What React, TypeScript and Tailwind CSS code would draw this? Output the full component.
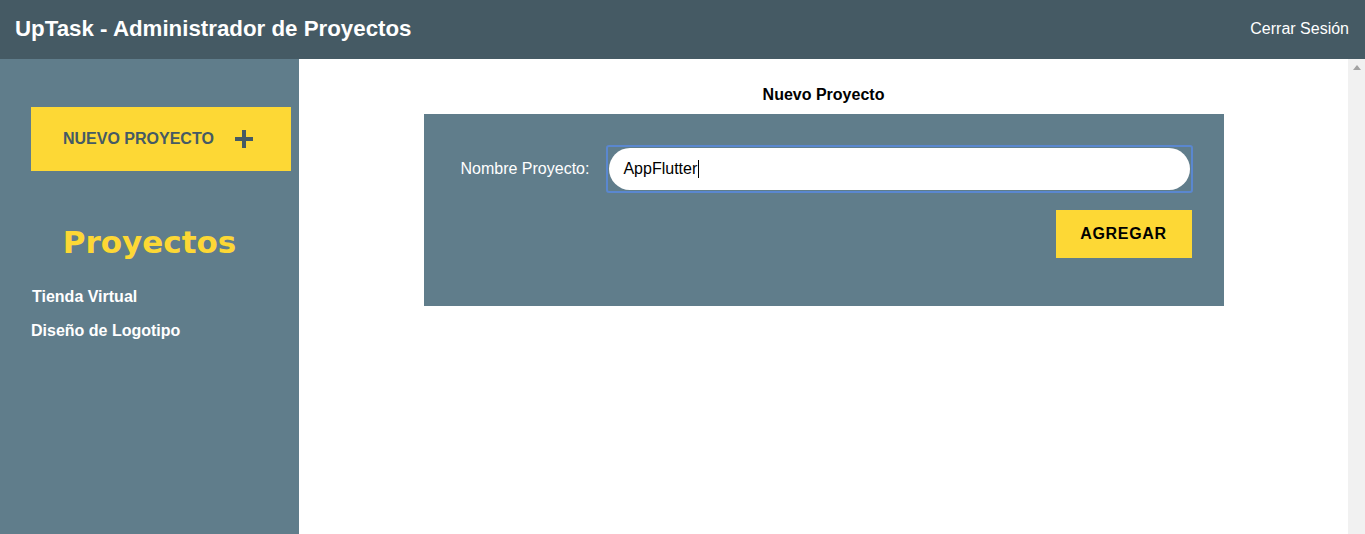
import React from 'react'

function Sidebar() {
    return (
        <aside className="w-[299px] shrink-0 bg-[#607d8b] pt-[48px]">
            <button type="button" className="ml-[31px] w-[260px] h-[64px] bg-[#fdd835] flex items-center pl-[32px] text-[#455a64] text-[16px] font-bold">
                NUEVO PROYECTO
                <svg width="18" height="18" viewBox="0 0 18 18" className="ml-[21px]">
                    <rect x="7" y="0" width="4" height="18" fill="#455a64" />
                    <rect x="0" y="7" width="18" height="4" fill="#455a64" />
                </svg>
            </button>
            <h2 className="mt-[53px] text-center text-[#fdd835] text-[31px] leading-[36px] font-bold font-['DejaVu_Sans',sans-serif]">Proyectos</h2>
            <ul className="mt-[28px] pl-[32px] text-white font-bold text-[16px] leading-[18px] flex flex-col gap-[16px]">
                <li>Tienda Virtual</li>
                <li className="-ml-px">Diseño de Logotipo</li>
            </ul>
        </aside>
    )
}

function NuevoProyecto() {
    return (
        <div className="flex-1 pt-[27px]">
            <h2 className="text-center font-bold text-[16px] leading-[18px] text-black">Nuevo Proyecto</h2>
            <form className="mt-[10px] mx-auto w-[800px] bg-[#607d8b] pt-[31px] pl-[37px] pr-[31px] pb-[48px]">
                <div className="flex items-center">
                    <label className="text-white text-[16px] whitespace-nowrap shrink-0">Nombre Proyecto:</label>
                    <div className="ml-[17px] flex-1 h-[48px] border-2 border-[#5a87cf] rounded-[3px] p-px">
                        <div className="h-full bg-white rounded-full flex items-center pl-[14px] text-[16px] text-black">
                            AppFlutter
                            <span className="ml-px w-px h-[18px] bg-black" />
                        </div>
                    </div>
                </div>
                <div className="flex justify-end mt-[17px] pr-px">
                    <button type="button" className="w-[136px] h-[48px] bg-[#fdd835] text-black font-bold text-[16px] tracking-[0.7px]">AGREGAR</button>
                </div>
            </form>
        </div>
    )
}

export default function App() {
    return (
        <div className="h-[534px] flex flex-col overflow-hidden font-['Liberation_Sans',Arial,sans-serif]">
            <header className="h-[59px] shrink-0 bg-[#455a64] flex items-center justify-between pl-[15px] pr-[16px] pb-[2px]">
                <h1 className="text-white font-bold text-[22.3px]">UpTask - Administrador de Proyectos</h1>
                <span className="text-white text-[16px]">Cerrar Sesión</span>
            </header>
            <div className="flex flex-1">
                <Sidebar />
                <main className="flex-1 flex bg-white">
                    <NuevoProyecto />
                    <div className="w-[17px] bg-[#f1f1f1] flex justify-center pt-[6px]">
                        <svg width="8" height="5" viewBox="0 0 8 5">
                            <polygon points="4,0 8,5 0,5" fill="#a3a3a3" />
                        </svg>
                    </div>
                </main>
            </div>
        </div>
    )
}
